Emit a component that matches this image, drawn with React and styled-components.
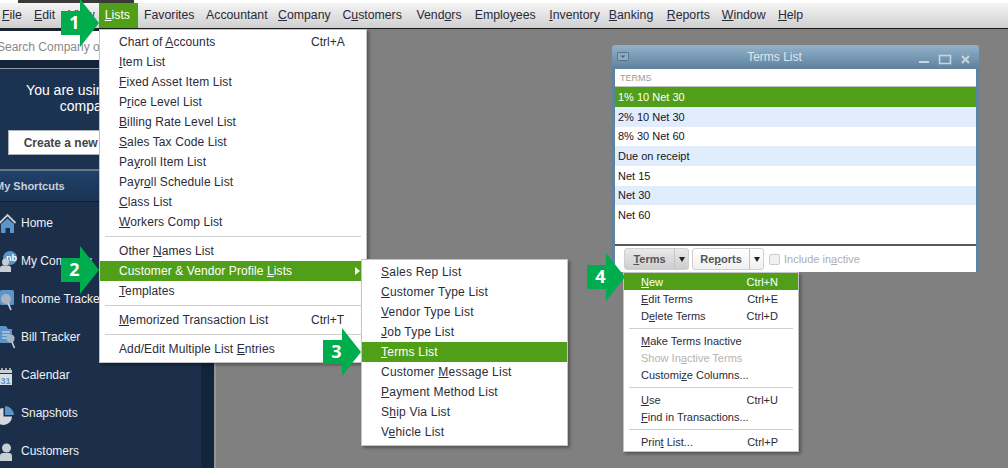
import React from 'react';
import styled, { createGlobalStyle } from 'styled-components';

const GlobalStyle = createGlobalStyle`
  html, body {
    margin: 0;
    padding: 0;
    background: #808080;
  }
  * {
    box-sizing: border-box;
  }
`;

const GREEN = '#519f19';

const Page = styled.div`
  position: relative;
  display: flex;
  flex-direction: column;
  width: 1008px;
  height: 468px;
  overflow: hidden;
  font-family: 'Liberation Sans', Arial, sans-serif;
  font-size: 12px;
  color: #2b2b3a;
`;

const TitleStrip = styled.div`
  flex: none;
  height: 3px;
  padding-left: 18px;
  background: #fff;
`;

const TitleStub = styled.div`
  width: 116px;
  height: 3px;
  background: #3a3a3a;
`;

const MenuBar = styled.div`
  flex: none;
  display: flex;
  height: 26px;
  padding-left: 2px;
  background: linear-gradient(#f5f5f5, #cfcfcf);
  border-bottom: 1px solid #1c1c1c;
`;

const MenuName = styled.div`
  display: flex;
  align-items: center;
  height: 25px;
  margin-left: ${({ $gap }) => $gap}px;
  padding: ${({ $active }) => ($active ? '0 8px 1px 6px' : '0 0 1px')};
  font-size: 12.3px;
  color: ${({ $active }) => ($active ? '#fff' : '#2a2a38')};
  background: ${({ $active }) => ($active ? GREEN : 'transparent')};
`;

const Body = styled.div`
  flex: 1;
  display: flex;
  min-height: 0;
`;

const Sidebar = styled.div`
  flex: none;
  display: flex;
  flex-direction: column;
  width: 201px;
  overflow: hidden;
  background: #1b2f4b;
`;

const SearchWell = styled.div`
  flex: none;
  height: 40px;
  padding-top: 2px;
  background: #14243a;
  border-bottom: 1px solid #8d99a6;
`;

const SearchInput = styled.div`
  display: flex;
  align-items: center;
  height: 29px;
  padding-top: 3px;
  background: #fff;
  color: #8a8a8a;
  white-space: nowrap;
  overflow: hidden;
  text-indent: -3px;
`;

const Notice = styled.div`
  flex: none;
  display: flex;
  flex-direction: column;
  align-items: center;
  height: 102px;
  padding: 13px 3px 0 0;
  background: #1b3251;
  border-bottom: 2px solid #6c7888;
`;

const NoticeText = styled.div`
  font-size: 14px;
  line-height: 16px;
  color: #fff;
  text-align: center;
`;

const CreateButton = styled.div`
  display: flex;
  align-items: center;
  justify-content: center;
  width: 182px;
  height: 25px;
  margin-top: 16px;
  background: #fff;
  border: 1px solid #aab0b8;
  font-weight: bold;
  color: #444;
`;

const ShortcutsHead = styled.div`
  flex: none;
  display: flex;
  align-items: center;
  height: 31px;
  margin-bottom: 2px;
  background: linear-gradient(#21416a, #1b3455);
  border-bottom: 1px solid #0f1e30;
  font-size: 11px;
  font-weight: bold;
  color: #c6d0da;
  white-space: nowrap;
  text-indent: -5px;
`;

const ShortcutRow = styled.div`
  flex: none;
  position: relative;
  display: flex;
  align-items: center;
  height: 38px;
  padding-left: 21px;
  color: #eef1f4;
  white-space: nowrap;
`;

const RowIcon = styled.svg`
  position: absolute;
  left: -3px;
  top: 7px;
  width: 24px;
  height: 24px;
`;

const Gutter = styled.div`
  flex: none;
  width: 13px;
  background: #13253c;
`;

const Workspace = styled.div`
  flex: 1;
  background: #808080;
  border-left: 2px solid #959595;
`;

const Menu = styled.div`
  position: absolute;
  left: ${({ $x }) => $x}px;
  top: ${({ $y }) => $y}px;
  width: ${({ $w }) => $w}px;
  padding: ${({ $pad }) => $pad}px 0 ${({ $pad }) => $pad + 1}px;
  background: #fff;
  border: 1px solid #c4c4c4;
  box-shadow: 2px 2px 3px rgba(0, 0, 0, 0.35);
`;

const MenuRow = styled.div`
  position: relative;
  display: flex;
  align-items: center;
  justify-content: space-between;
  height: ${({ $h }) => $h}px;
  padding: 0 ${({ $right }) => $right}px 0 ${({ $left }) => $left}px;
  font-size: ${({ $size }) => $size}px;
  letter-spacing: ${({ $track }) => $track}px;
  white-space: nowrap;
  color: ${({ $active, $off }) => ($active ? '#fff' : $off ? '#b4b4b4' : '#2b2b3a')};
  background: ${({ $active }) => ($active ? GREEN : 'transparent')};
`;

const KeyText = styled.span`
  width: ${({ $w }) => ($w ? `${$w}px` : 'auto')};
  letter-spacing: 0;
`;

const MenuRule = styled.div`
  height: 1px;
  margin: ${({ $gap }) => $gap}px 5px;
  background: #cfcfcf;
`;

const SubArrow = styled.span`
  position: absolute;
  right: 6px;
  top: 6px;
  border-left: 5px solid #fff;
  border-top: 4px solid transparent;
  border-bottom: 4px solid transparent;
`;

const Win = styled.div`
  position: absolute;
  left: 612px;
  top: 45px;
  display: flex;
  flex-direction: column;
  width: 367px;
  height: 227px;
  padding: 0 3px 0;
  background: #5f829f;
  border-radius: 3px 3px 0 0;
`;

const WinTitle = styled.div`
  flex: none;
  position: relative;
  display: flex;
  align-items: center;
  justify-content: center;
  height: 24px;
  margin: 0 -3px;
  padding-right: 42px;
  border-radius: 3px 3px 0 0;
  background: linear-gradient(#92b2ca, #5f819e);
  color: #dfe7ed;
`;

const WinGlyphs = styled.svg`
  position: absolute;
  left: 0;
  top: 0;
  width: 367px;
  height: 24px;
`;

const WinInner = styled.div`
  flex: 1;
  display: flex;
  flex-direction: column;
  background: #fff;
`;

const ColumnHead = styled.div`
  flex: none;
  display: flex;
  align-items: center;
  height: 18.3px;
  padding-left: 5px;
  font-size: 9px;
  color: #9a9a9a;
  border-bottom: 1px solid #c2c2c2;
`;

const TermRow = styled.div`
  flex: none;
  display: flex;
  align-items: center;
  height: 19.67px;
  padding-left: 3px;
  font-size: 11px;
  color: ${({ $active }) => ($active ? '#fff' : '#15151f')};
  background: ${({ $active, $alt }) => ($active ? GREEN : $alt ? '#e1edfd' : '#fff')};
`;

const TermRows = styled.div`
  flex: 1;
`;

const WinFooter = styled.div`
  flex: none;
  display: flex;
  align-items: center;
  height: 28px;
  padding-left: 9px;
  border-top: 2px solid #585858;
`;

const DropButton = styled.div`
  display: flex;
  width: ${({ $w }) => $w}px;
  height: 22px;
  margin-right: 3px;
  font-size: 11px;
  font-weight: bold;
  color: #555;
  background: ${({ $open }) => ($open ? 'linear-gradient(#e9e9e9, #cdcdcd)' : 'linear-gradient(#fff, #f0f0f0)')};
  border: 1px solid #cfcfcf;
  border-radius: 3px;
`;

const DropLabel = styled.div`
  flex: 1;
  display: flex;
  align-items: center;
  justify-content: center;
`;

const DropCaret = styled.div`
  flex: none;
  display: flex;
  align-items: center;
  justify-content: center;
  width: 14px;
  border-left: 1px solid #c4c4c4;

  &::after {
    content: '';
    border-top: 5px solid #222;
    border-left: 3.5px solid transparent;
    border-right: 3.5px solid transparent;
  }
`;

const CheckBox = styled.div`
  flex: none;
  width: 11px;
  height: 11px;
  margin: 0 4px 0 2px;
  background: #f1f1f1;
  border: 1px solid #cccccc;
  border-radius: 2px;
`;

const CheckLabel = styled.div`
  font-size: 11px;
  color: #adadad;
`;

const ArrowWrap = styled.div`
  position: absolute;
  left: ${({ $x }) => $x}px;
  top: ${({ $y }) => $y}px;
  width: 38px;
  height: 48px;
`;

const ArrowShape = styled.svg`
  display: block;
  width: 38px;
  height: 48px;
`;

const ArrowNum = styled.span`
  position: absolute;
  left: 0;
  top: 0;
  width: 27px;
  height: 48px;
  font-family: 'Open Sans', sans-serif;
  font-size: 18px;
  font-weight: bold;
  line-height: 47px;
  text-align: center;
  color: #fff;
`;

// "_" marks the mnemonic letter
const Label = ({ text }) => {
  const at = text.indexOf('_');
  if (at < 0) return <span>{text}</span>;
  return (
    <span>
      {text.slice(0, at)}
      <u>{text[at + 1]}</u>
      {text.slice(at + 2)}
    </span>
  );
};

const Arrow = ({ x, y, n }) => (
  <ArrowWrap $x={x} $y={y}>
    <ArrowShape viewBox="0 0 38 48">
      <polygon points="0,12 19,12 19,0 38,24 19,48 19,36 0,36" fill="#00ad4e" />
    </ArrowShape>
    <ArrowNum>{n}</ArrowNum>
  </ArrowWrap>
);

const menuNames = [
  ['_File', 0],
  ['_Edit', 12.2],
  ['_View', 13],
  ['_Lists', 4, true],
  ['Favorites', 6],
  ['Accountant', 11.5],
  ['_Company', 10.5],
  ['C_ustomers', 11.7],
  ['Vend_ors', 14.6],
  ['Emplo_yees', 13.2],
  ['_Inventory', 13.6],
  ['_Banking', 9],
  ['_Reports', 13.5],
  ['_Window', 12],
  ['_Help', 12.3],
];

const listsItems = [
  ['Chart of _Accounts', 'Ctrl+A'],
  ['_Item List'],
  ['_Fixed Asset Item List'],
  ['P_rice Level List'],
  ['_Billing Rate Level List'],
  ['_Sales Tax Code List'],
  ['Pa_yroll Item List'],
  ['Payr_oll Schedule List'],
  ['_Class List'],
  ['_Workers Comp List'],
  'rule',
  ['Other _Names List'],
  ['Customer & Vendor Profile _Lists', null, 'active'],
  ['_Templates'],
  'rule',
  ['_Memorized Transaction List', 'Ctrl+T'],
  'rule',
  ['Add/Edit Multiple List _Entries'],
];

const profileItems = [
  ['_Sales Rep List'],
  ['_Customer Type List'],
  ['_Vendor Type List'],
  ['_Job Type List'],
  ['_Terms List', null, 'active'],
  ['Customer _Message List'],
  ['_Payment Method List'],
  ['S_hip Via List'],
  ['V_ehicle List'],
];

const termsItems = [
  ['_New', 'Ctrl+N', 'active'],
  ['_Edit Terms', 'Ctrl+E'],
  ['D_elete Terms', 'Ctrl+D'],
  'rule',
  ['_Make Terms Inactive'],
  ['Show In_active Terms', null, 'off'],
  ['Customi_ze Columns...'],
  'rule',
  ['_Use', 'Ctrl+U'],
  ['_Find in Transactions...'],
  'rule',
  ['Prin_t List...', 'Ctrl+P'],
];

const terms = ['1% 10 Net 30', '2% 10 Net 30', '8% 30 Net 60', 'Due on receipt', 'Net 15', 'Net 30', 'Net 60'];

const HomeIcon = () => (
  <>
    <path d="M2.5 12 L10.5 4 L18.5 12" fill="none" stroke="#c9ced4" strokeWidth="1.8" />
    <path d="M4 13 L10.5 7.5 L17 13 V22 H13 V17 H8.5 V22 H4 Z" fill="#5a94c8" />
  </>
);

const CompanyIcon = () => (
  <>
    <circle cx="13" cy="9" r="7" fill="#5a94c8" />
    <text x="9" y="12" fontSize="9" fontWeight="bold" fill="#fff" fontFamily="'Liberation Sans', sans-serif">nb</text>
    <circle cx="8.5" cy="13" r="3.5" fill="#c9ced4" />
    <path d="M3 23 V19 Q3 16.5 6 16.5 H11 Q14 16.5 14 19 V23 Z" fill="#c9ced4" />
  </>
);

const IncomeIcon = () => (
  <>
    <rect x="3" y="3" width="14" height="15" rx="1.5" fill="#5a94c8" />
    <circle cx="9" cy="12" r="5" fill="#aab4be" />
    <path d="M11 16 L14 23" stroke="#c9ced4" strokeWidth="1.8" />
  </>
);

const BillIcon = () => (
  <>
    <path d="M3 1 H9 L11 4 H15 V18 H3 Z" fill="#5a94c8" />
    <path d="M5 7 H13 M5 10 H13 M5 13 H11" stroke="#dfe6ec" strokeWidth="1" />
    <circle cx="13.5" cy="13.5" r="4" fill="#aab4be" />
    <path d="M15 17 L17.5 23" stroke="#c9ced4" strokeWidth="1.6" />
  </>
);

const CalendarIcon = () => (
  <>
    <rect x="3" y="7" width="12" height="3" fill="#c9ced4" />
    <path d="M5 5 V9 M9 5 V9 M13 5 V9" stroke="#c9ced4" strokeWidth="1.5" />
    <rect x="3" y="11" width="12" height="11" fill="#d8dde2" />
    <text x="3.5" y="20.5" fontSize="9" fontWeight="bold" fill="#5a94c8" fontFamily="'Liberation Sans', sans-serif">31</text>
  </>
);

const SnapshotIcon = () => (
  <>
    <path d="M8 5 A9.5 9.5 0 0 1 17 14 H8 Z" fill="#5a94c8" />
    <path d="M6.5 7 V15.5 H15 A8.5 8.5 0 1 1 6.5 7 Z" fill="#d4d8dc" />
  </>
);

const PersonIcon = () => (
  <>
    <circle cx="9.5" cy="9" r="4.5" fill="#c9ced4" />
    <path d="M3 22 V17 Q3 14 6 14 H12 Q15 14 15 17 V22 Z" fill="#c9ced4" />
  </>
);

const shortcuts = [
  ['Home', HomeIcon],
  ['My Company', CompanyIcon],
  ['Income Tracker', IncomeIcon],
  ['Bill Tracker', BillIcon],
  ['Calendar', CalendarIcon],
  ['Snapshots', SnapshotIcon],
  ['Customers', PersonIcon],
];

const MenuList = ({ items, h, left, right, size, track = 0, ruleGap, arrowOn, keyWidth }) =>
  items.map((item, i) => {
    if (item === 'rule') return <MenuRule key={i} $gap={ruleGap} />;
    const [text, keys, state] = item;
    return (
      <MenuRow
        key={text}
        $h={h}
        $left={left}
        $right={right}
        $size={size}
        $track={track}
        $active={state === 'active'}
        $off={state === 'off'}
      >
        <Label text={text} />
        {keys && <KeyText $w={keyWidth}>{keys}</KeyText>}
        {arrowOn && state === 'active' && <SubArrow />}
      </MenuRow>
    );
  });

const App = () => (
  <Page>
    <GlobalStyle />
    <TitleStrip>
      <TitleStub />
    </TitleStrip>
    <MenuBar>
      {menuNames.map(([name, gap, active]) => (
        <MenuName key={name} $gap={gap} $active={active}>
          <Label text={name} />
        </MenuName>
      ))}
    </MenuBar>
    <Body>
      <Sidebar>
        <SearchWell>
          <SearchInput>Search Company or Help</SearchInput>
        </SearchWell>
        <Notice>
          <NoticeText>
            You are using a sample
            <br />
            company file
          </NoticeText>
          <CreateButton>Create a new company file</CreateButton>
        </Notice>
        <ShortcutsHead>My Shortcuts</ShortcutsHead>
        {shortcuts.map(([name, Icon]) => (
          <ShortcutRow key={name}>
            <RowIcon viewBox="0 0 24 24">
              <Icon />
            </RowIcon>
            {name}
          </ShortcutRow>
        ))}
      </Sidebar>
      <Gutter />
      <Workspace />
    </Body>

    <Win>
      <WinTitle>
        <WinGlyphs viewBox="0 0 367 24">
          <rect x="5.5" y="7.5" width="11" height="8" rx="1" fill="#8fabc1" stroke="#55748e" />
          <path d="M8.5 10.5 H13.5 L11 13 Z" fill="#4a6580" />
          <rect x="307" y="16" width="10" height="2" fill="#c8d4de" />
          <rect x="327.5" y="10.5" width="11" height="8" fill="none" stroke="#c8d4de" strokeWidth="1.6" />
          <path d="M350 11 L357 18 M357 11 L350 18" stroke="#c8d4de" strokeWidth="2.2" />
        </WinGlyphs>
        Terms List
      </WinTitle>
      <WinInner>
        <ColumnHead>TERMS</ColumnHead>
        <TermRows>
          {terms.map((t, i) => (
            <TermRow key={t} $active={i === 0} $alt={i % 2 === 1}>
              {t}
            </TermRow>
          ))}
        </TermRows>
        <WinFooter>
          <DropButton $w={65} $open>
            <DropLabel>
              <Label text="_Terms" />
            </DropLabel>
            <DropCaret />
          </DropButton>
          <DropButton $w={72}>
            <DropLabel>
              <Label text="Re_ports" />
            </DropLabel>
            <DropCaret />
          </DropButton>
          <CheckBox />
          <CheckLabel>
            <Label text="Include in_active" />
          </CheckLabel>
        </WinFooter>
      </WinInner>
    </Win>

    <Menu $x={99} $y={29} $w={268} $pad={2}>
      <MenuList items={listsItems} h={20} left={19} right={21} size={12} track={0.1} ruleGap={4} arrowOn keyWidth={34} />
    </Menu>
    <Menu $x={361} $y={259} $w={207} $pad={2}>
      <MenuList items={profileItems} h={20} left={19} right={10} size={12} track={0.22} ruleGap={4} />
    </Menu>
    <Menu $x={623} $y={272} $w={176} $pad={0}>
      <MenuList items={termsItems} h={17} left={17} right={20} size={11} ruleGap={3.5} />
    </Menu>

    <Arrow x={61} y={-1} n={1} />
    <Arrow x={61} y={246} n={2} />
    <Arrow x={323} y={328} n={3} />
    <Arrow x={587} y={253} n={4} />
  </Page>
);

export default App;
